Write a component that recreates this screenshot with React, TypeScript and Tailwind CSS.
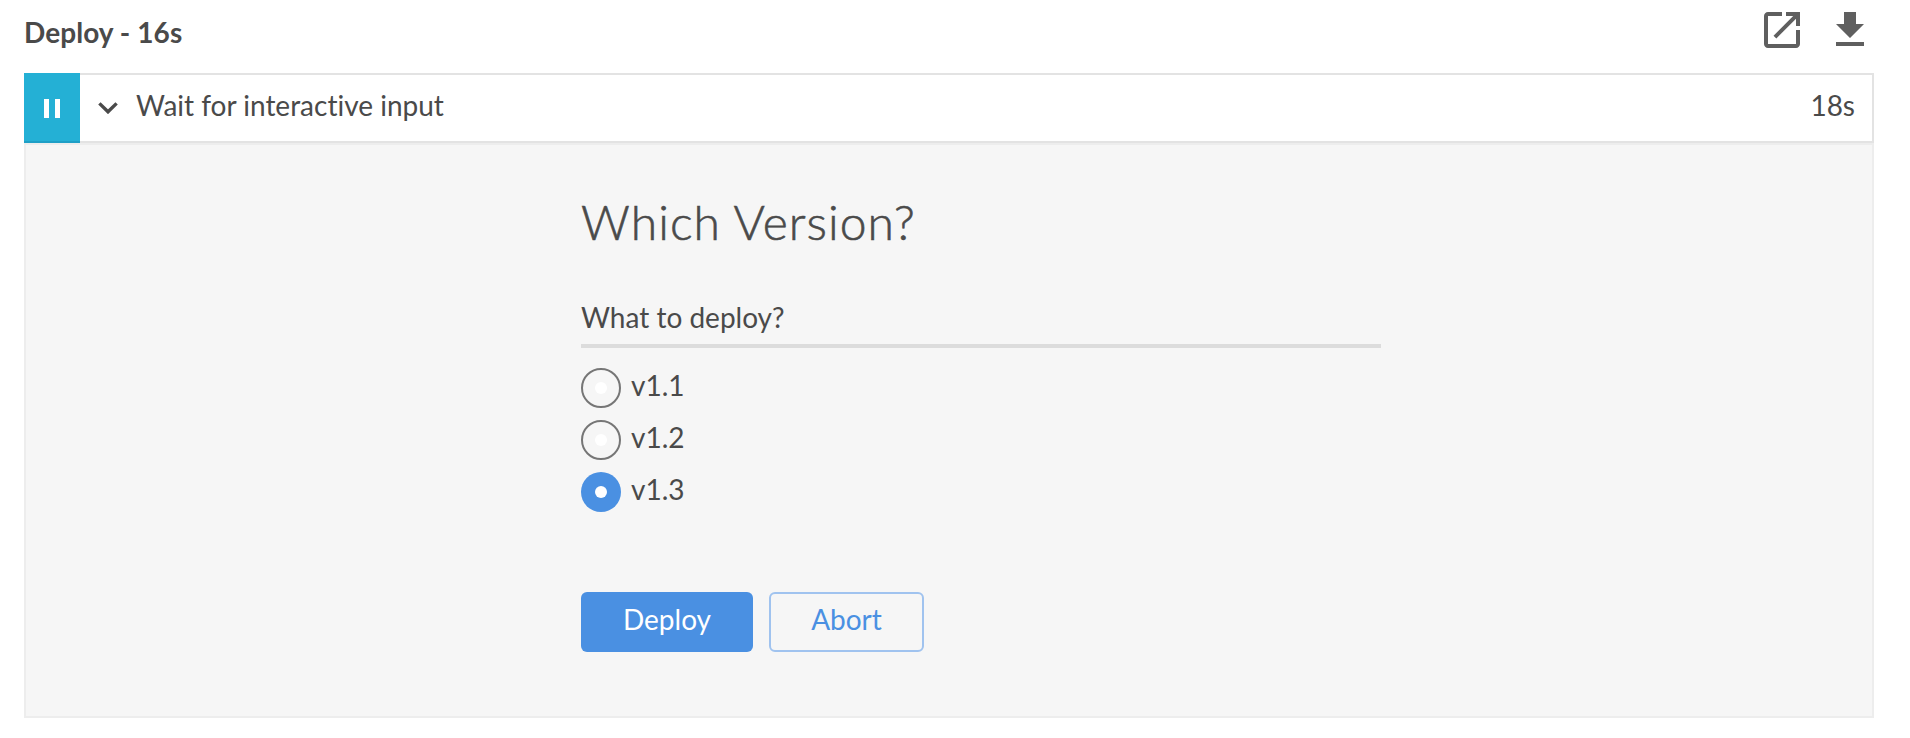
const versions = ['v1.1', 'v1.2', 'v1.3'];
const selected = 'v1.3';

function Radio({ checked }: { checked: boolean }) {
  return (
    <span
      className={
        checked
          ? 'flex size-10 items-center justify-center rounded-full bg-[#4a90e2]'
          : 'flex size-10 items-center justify-center rounded-full border-2 border-[#767676]'
      }
    >
      <span className="size-3 rounded-full bg-white" />
    </span>
  );
}

export default function App() {
  return (
    <div className="h-[738px] w-[1910px] bg-white px-6 pr-9 font-['Lato',sans-serif] text-[28px] leading-[40px] text-[#4a4a4a] [font-variant-ligatures:none]">
      <header className="flex h-[73px] items-start justify-between">
        <h1 className="pt-3 font-bold tracking-[0.07px]">Deploy - 16s</h1>
        <div className="flex gap-5 pt-1.5 text-[#5f5f5f]">
          <svg className="size-12" viewBox="0 0 24 24" fill="currentColor">
            <path d="M19 19H5V5h7V3H5c-1.11 0-2 .9-2 2v14c0 1.1.89 2 2 2h14c1.1 0 2-.9 2-2v-7h-2v7zM14 3v2h3.59l-9.83 9.83 1.41 1.41L19 6.41V10h2V3h-7z" />
          </svg>
          <svg className="size-12" viewBox="0 0 24 24" fill="currentColor">
            <path d="M19 9h-4V3H9v6H5l7 7 7-7zM5 18v2h14v-2H5z" />
          </svg>
        </div>
      </header>

      <div className="flex h-[70px]">
        <div className="flex w-14 items-center justify-center border-b-2 border-[#1f9fc6] bg-[#24b0d5]">
          <svg className="mt-0.5 h-[19px] w-4" viewBox="0 0 16 19" fill="#fff">
            <path d="M0 0h5v19H0zM11 0h5v19h-5z" />
          </svg>
        </div>
        <div className="flex flex-1 items-center border-y-2 border-r-2 border-[#e3e3e3] pr-[17px] pl-[18px]">
          <svg className="h-3 w-5" viewBox="0 0 20 12" fill="none" stroke="#4a4a4a" strokeWidth="3.4">
            <path d="M1.4 1.4 10 9.8l8.6-8.4" />
          </svg>
          <span className="ml-[18px] flex-1 pb-1.5">Wait for interactive input</span>
          <span className="pb-1.5">18s</span>
        </div>
      </div>

      <main className="h-[575px] border-2 border-[#ededed] bg-[#f6f6f6] pt-[45px] pl-[555px]">
        <h2 className="text-[48px] leading-[64px] font-light tracking-[1.05px] [-webkit-text-stroke:0.6px_#4a4a4a]">
          Which Version?
        </h2>
        <div className="mt-[43px] h-[51px] w-[800px] border-b-4 border-[#dcdcdc]">What to deploy?</div>
        <div className="mt-5 flex flex-col gap-3">
          {versions.map((v) => (
            <label key={v} className="flex h-10 items-center gap-2.5">
              <Radio checked={v === selected} />
              <span className="pb-1.5">{v}</span>
            </label>
          ))}
        </div>
        <div className="mt-20 flex gap-4">
          <button className="h-[60px] w-[172px] rounded-md bg-[#4a90e2] pb-1.5 text-white">Deploy</button>
          <button className="h-[60px] w-[155px] rounded-md border-2 border-[#a0c3ef] pb-1.5 text-[#4a90e2]">Abort</button>
        </div>
      </main>
    </div>
  );
}
